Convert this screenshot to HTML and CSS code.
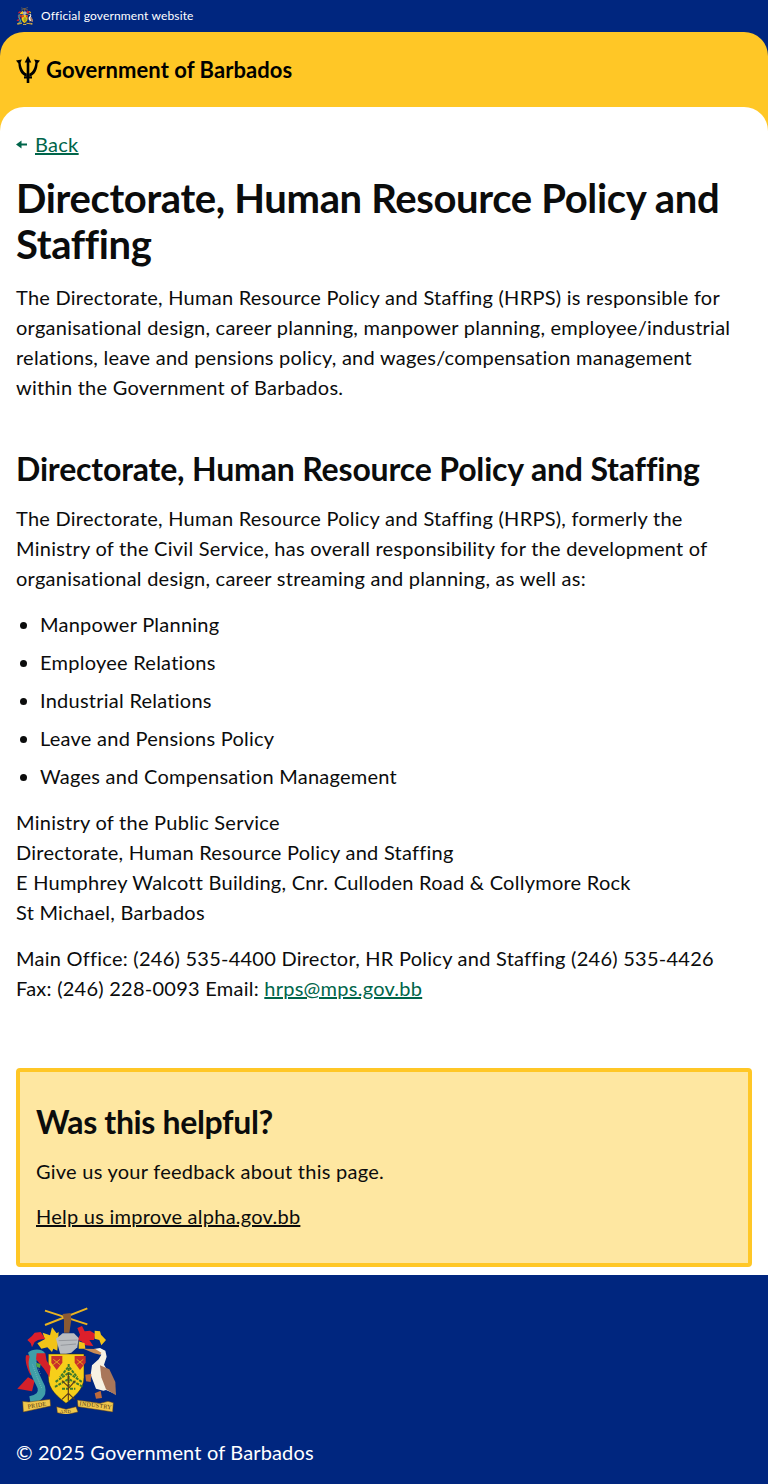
FILE: index.html
```html
<!DOCTYPE html>
<html lang="en">

<head>
    <meta charset="UTF-8">
    <meta name="viewport" content="width=device-width, initial-scale=1.0">
    <title>Directorate, Human Resource Policy and Staffing - Government of Barbados</title>
    <link rel="stylesheet" href="styles.css">
</head>

<body>
    <svg class="defs" xmlns="http://www.w3.org/2000/svg">
        <symbol id="arms" viewBox="48 48 300 324">
            <!-- crossed sugar canes and fist -->
            <path d="M135 105 262 55M135 62 262 103" fill="none" stroke="#e8b321" stroke-width="6" />
            <path d="M188 72 212 69 214 90 208 128 192 128 192 92Z" fill="#8a5a34" />
            <!-- mantling -->
            <path d="M112 160 134 148 128 128 150 136 156 112 170 130 176 126 172 182 160 176 156 186 142 172 124 176Z" fill="#f2c318" />
            <path d="M82 150 96 138 104 128 122 126 136 146 114 150 104 156 96 172 92 160Z" fill="#dd1f2b" />
            <path d="M232 114 246 108 254 124 270 122 286 132 282 150 268 150 280 168 256 166 244 154 232 150 240 134Z" fill="#dd1f2b" />
            <path d="M284 122 300 124 303 134 318 150 304 166 298 150 284 146Z" fill="#f2c318" />
            <path d="M236 154 254 160 256 176 236 176Z" fill="#f2c318" />
            <!-- helmet -->
            <path d="M168 146 188 130 222 130 236 144 232 172 214 188 182 196 174 168Z" fill="#b9bcc0" />
            <path d="M176 152 232 150M182 166 228 162" stroke="#83878c" stroke-width="2" fill="none" />
            <!-- shield -->
            <path d="M145 192H252V262C252 300 220 322 198 340 176 322 145 300 145 262Z" fill="#f6cf1a" stroke="#33291a" stroke-width="1.5" />
            <path d="M154 198H187V218L170 240 154 218Z" fill="#c9302a" />
            <path d="M224 198H257V218L240 240 224 218Z" fill="#c9302a" />
            <path d="M160 208 180 224M180 208 160 224M230 208 250 224M250 208 230 224" stroke="#e7a01e" stroke-width="3" />
            <!-- bearded fig tree -->
            <g fill="none" stroke="#3d7a2c" stroke-width="6" stroke-dasharray="9 3">
                <path d="M206 222 206 290" />
                <path d="M204 232 180 262M208 232 232 262" />
                <path d="M204 250 166 276M208 250 246 276" />
                <path d="M204 268 162 292M208 268 248 290" />
                <path d="M186 296 226 296" />
            </g>
            <path d="M205 250V318M205 290 186 272M205 296 226 272M186 328 205 310 224 328M205 312V332" stroke="#5a3a1c" stroke-width="3.500" fill="none" />
            <!-- dolphin -->
            <path d="M52 296 84 262 104 272 96 304Z" fill="#d42029" />
            <path d="M78 196C74 214 82 238 92 256L106 244C94 228 88 212 90 196Z" fill="#d42029" />
            <path d="M102 200C88 226 108 258 124 292 130 316 112 326 90 330" fill="none" stroke="#3f9ea8" stroke-width="23" />
            <path d="M84 188C96 176 124 174 134 188 138 198 124 208 108 210L92 208Z" fill="#3f9ea8" />
            <path d="M98 224 110 258 126 296M108 216 122 254" fill="none" stroke="#a5d4c8" stroke-width="2" stroke-dasharray="2 4" />
            <path d="M110 190 136 190 140 212 152 230 148 262 132 236 120 222 108 208Z" fill="#d42029" />
            <path d="M108 218 122 222 120 234 110 230Z" fill="#58a83c" />
            <!-- pelican -->
            <path d="M276 178 300 174 316 182 320 200 312 224 340 270 346 312 318 300 310 302 288 296 272 254 276 226 296 208 304 194 282 186Z" fill="#f7f2e4" />
            <path d="M250 176 286 177 304 188 300 194 282 190Z" fill="#c98b55" />
            <path d="M300 226 328 238 346 276 348 316 318 298 304 262Z" fill="#a9765a" />
            <path d="M284 310 302 302 306 324 288 326ZM256 254 274 252 272 276 258 274Z" fill="#bd6a3c" />
            <!-- motto scroll -->
            <path d="M68 334 86 336 150 328 152 348 88 362 70 366Z" fill="#efc64c" stroke="#5b3b16" stroke-width="1.500" />
            <path d="M170 350 198 358 228 350 234 366 198 374 172 368Z" fill="#efc64c" stroke="#5b3b16" stroke-width="1.500" />
            <path d="M232 330 300 340 324 334 340 338 338 366 300 360 234 350Z" fill="#efc64c" stroke="#5b3b16" stroke-width="1.500" />
            <text x="84" y="356" class="motto" transform="rotate(-9 84 356)">PRIDE</text>
            <text x="180" y="369" class="motto motto-small">AND</text>
            <text x="238" y="346" class="motto" transform="rotate(7 238 346)">INDUSTRY</text>
        </symbol>
    </svg>

    <div class="official-bar">
        <svg class="official-arms"><use href="#arms" /></svg>
        <span>Official government website</span>
    </div>

    <div class="shell">
        <header class="brand">
            <svg class="trident" viewBox="0 0 24 27" fill="currentColor">
                <path d="M12 0 15.300 6.500H13.300V27H10.700V6.500H8.700Z" />
                <path d="M0 4.500 5.800 3.600 4.600 6.400C5 11 7 16 10.800 17.500V20.500C5 19.500 2.500 13 2.400 7.500Z" />
                <path d="M24 4.500 18.200 3.600 19.400 6.400C19 11 17 16 13.200 17.500V20.500C19 19.500 21.500 13 21.600 7.500Z" />
                <path d="M8 20.300H16V22.500H8Z" />
            </svg>
            <span class="brand-name">Government of Barbados</span>
        </header>

        <main class="content">
            <a class="back" href="#">
                <svg class="back-icon" viewBox="0 0 10 8"><path d="M0 4 5 .4V3H10V5H5V7.600Z" fill="currentColor" /></svg>
                <span class="back-label">Back</span>
            </a>

            <h1>Directorate, Human Resource Policy and Staffing</h1>
            <p class="intro">The Directorate, Human Resource Policy and Staffing (HRPS) is responsible for organisational design, career planning, manpower planning, employee/industrial relations, leave and pensions policy, and wages/compensation management within the Government of Barbados.</p>

            <h2>Directorate, Human Resource Policy and Staffing</h2>
            <p class="after-heading">The Directorate, Human Resource Policy and Staffing (HRPS), formerly the Ministry of the Civil Service, has overall responsibility for the development of organisational design, career streaming and planning, as well as:</p>
            <ul>
                <li>Manpower Planning</li>
                <li>Employee Relations</li>
                <li>Industrial Relations</li>
                <li>Leave and Pensions Policy</li>
                <li>Wages and Compensation Management</li>
            </ul>
            <p>Ministry of the Public Service<br>Directorate, Human Resource Policy and Staffing<br>E Humphrey Walcott Building, Cnr. Culloden Road &amp; Collymore Rock<br>St Michael, Barbados</p>
            <p>Main Office: (246) 535-4400 Director, HR Policy and Staffing (246) 535-4426 Fax: (246) 228-0093 Email: <a class="link" href="#">hrps@mps.gov.bb</a></p>

            <section class="feedback">
                <h3>Was this helpful?</h3>
                <p>Give us your feedback about this page.</p>
                <p><a class="feedback-link" href="#">Help us improve alpha.gov.bb</a></p>
            </section>
        </main>
    </div>

    <footer class="site-footer">
        <svg class="footer-arms"><use href="#arms" /></svg>
        <p>© 2025 Government of Barbados</p>
    </footer>
</body>

</html>
```

FILE: styles.css
```css
body,
html {
    margin: 0;
    font-family: 'Lato', 'Liberation Sans', sans-serif;
    color: #0b0c0c;
}

body {
    background-color: #00267f;
    font-size: 20px;
    line-height: 30px;
    letter-spacing: .25px;
    font-variant-ligatures: none;
}

a {
    text-decoration-thickness: 2px;
}

.defs {
    display: none;
}

.motto {
    font-family: 'Liberation Serif', serif;
    font-size: 18px;
    letter-spacing: 1px;
    fill: #4a3212;
}

.motto-small {
    font-size: 14px;
}

.official-bar {
    display: flex;
    align-items: center;
    gap: 8px;
    height: 32px;
    padding: 0 16px;
    color: #fff;
    font-size: 12px;
    letter-spacing: .15px;
}

.official-arms {
    width: 17px;
    height: 18px;
}

.shell {
    background-color: #ffc726;
    border-radius: 24px 24px 0 0;
}

.brand {
    display: flex;
    align-items: center;
    gap: 6px;
    height: 75px;
    box-sizing: border-box;
    padding: 0 16px;
    color: #000;
}

.trident {
    width: 24px;
    height: 27px;
}

.brand-name {
    font-size: 22px;
    font-weight: 700;
    letter-spacing: .05px;
}

.content {
    background-color: #fff;
    border-radius: 24px 24px 0 0;
    padding: 22px 16px 8px;
}

.back {
    display: flex;
    align-items: center;
    gap: 8px;
    color: #00654a;
}

.back-icon {
    width: 11px;
    height: 9px;
}

.back-label {
    text-decoration: underline;
    text-decoration-thickness: 2px;
}

h1 {
    margin: 16px 0 0;
    font-size: 40px;
    line-height: 46px;
    font-weight: 700;
    letter-spacing: -.35px;
}

h2 {
    margin: 47px 0 0;
    font-size: 32px;
    line-height: 40px;
    font-weight: 700;
    letter-spacing: -.17px;
}

h3 {
    margin: 0;
    font-size: 32px;
    line-height: 40px;
    font-weight: 700;
    letter-spacing: -.35px;
}

p {
    margin: 16px 0 0;
}

.intro {
    margin-top: 15px;
}

.after-heading {
    margin-top: 14px;
}

ul {
    margin: 16px 0 0;
    padding-left: 24px;
}

li+li {
    margin-top: 8px;
}

.link {
    color: #00654a;
}

.feedback {
    margin-top: 65px;
    padding: 30px 16px 32px;
    background-color: #fee7a1;
    border: 4px solid #ffc726;
    border-radius: 4px;
}

.feedback p {
    margin-top: 14px;
}

.feedback p+p {
    margin-top: 15px;
}

.feedback-link {
    color: #0b0c0c;
}

.site-footer {
    padding: 31px 16px 16px;
    color: #fff;
}

.footer-arms {
    display: block;
    width: 100px;
    height: 108px;
}

.site-footer p {
    margin: 23px 0 0;
    letter-spacing: .15px;
}
```
